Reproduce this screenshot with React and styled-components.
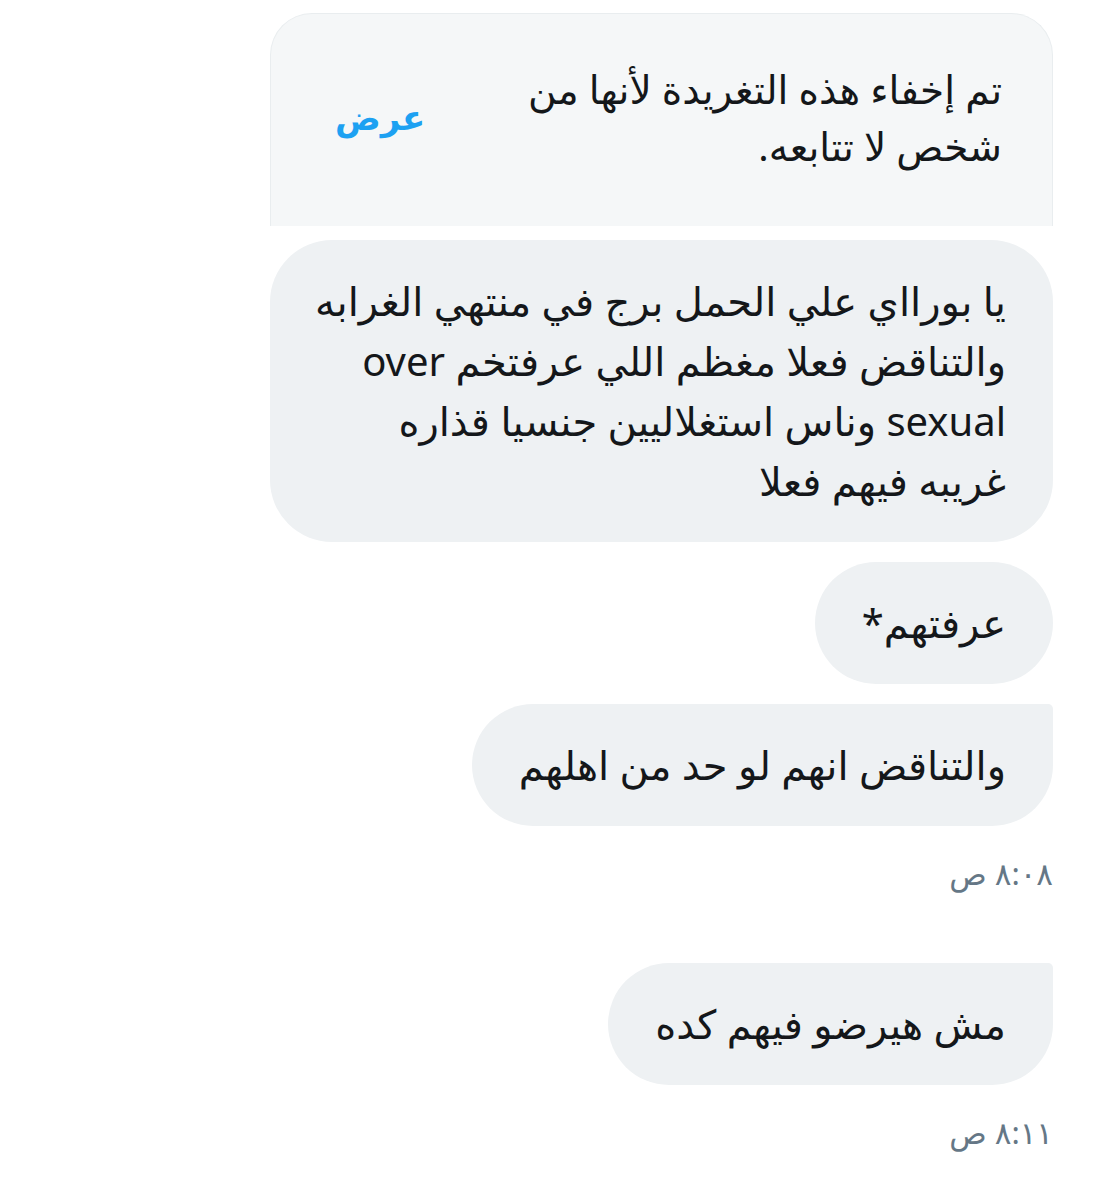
import React from 'react';
import styled, { createGlobalStyle } from 'styled-components';

const GlobalStyle = createGlobalStyle`
  html, body {
    margin: 0;
    padding: 0;
    background: #ffffff;
  }
  body {
    font-family: "Noto Sans", "DejaVu Sans", sans-serif;
    color: #14171a;
  }
`;

const Conversation = styled.div`
  direction: rtl;
  width: 783px;
  margin: 13px 50px 0 auto;
  display: flex;
  flex-direction: column;
  align-items: flex-start;
`;

const HiddenCard = styled.div`
  width: 100%;
  box-sizing: border-box;
  display: flex;
  align-items: center;
  justify-content: space-between;
  height: 213px;
  padding: 18px 50px 24px 64px;
  background: #f5f7f8;
  border: 1px solid #e9edef;
  border-bottom: none;
  border-radius: 42px 42px 0 0;
`;

const HiddenText = styled.p`
  margin: 0;
  font-size: 39px;
  line-height: 57px;
`;

const ShowLink = styled.a`
  color: #1da1f2;
  font-size: 34px;
  font-weight: 700;
  text-decoration: none;
  cursor: pointer;
`;

const Bubble = styled.div`
  box-sizing: border-box;
  max-width: 100%;
  margin-top: ${p => p.$gap}px;
  padding: 31px 47px;
  background: #eef1f3;
  font-size: 40px;
  line-height: 60px;
  border-radius: ${p => (p.$last ? '62px 5px 62px 62px' : '62px')};
`;

const Line = styled.span`
  display: block;
  white-space: nowrap;
`;

const Stamp = styled.div`
  align-self: flex-start;
  margin-top: 27px;
  font-size: 31px;
  color: #657786;
  line-height: 40px;
`;

const messages = [
  {
    lines: [
      'يا بورااي علي الحمل برج في منتهي الغرابه',
      'والتناقض فعلا مغظم اللي عرفتخم over',
      'sexual وناس استغلاليين جنسيا قذاره',
      'غريبه فيهم فعلا',
    ],
    gap: 14,
  },
  { lines: ['عرفتهم*'], gap: 20 },
  { lines: ['والتناقض انهم لو حد من اهلهم'], gap: 20, last: true, time: '٨:٠٨ ص' },
  { lines: ['مش هيرضو فيهم كده'], gap: 70, last: true, time: '٨:١١ ص' },
];

export default function App() {
  return (
    <>
      <GlobalStyle />
      <Conversation>
        <HiddenCard>
          <HiddenText>
            <Line>تم إخفاء هذه التغريدة لأنها من</Line>
            <Line>شخص لا تتابعه.</Line>
          </HiddenText>
          <ShowLink>عرض</ShowLink>
        </HiddenCard>
        {messages.map((m, i) => (
          <React.Fragment key={i}>
            <Bubble $gap={m.gap} $last={m.last}>
              {m.lines.map((l, j) => <Line key={j}>{l}</Line>)}
            </Bubble>
            {m.time && <Stamp>{m.time}</Stamp>}
          </React.Fragment>
        ))}
      </Conversation>
    </>
  );
}
